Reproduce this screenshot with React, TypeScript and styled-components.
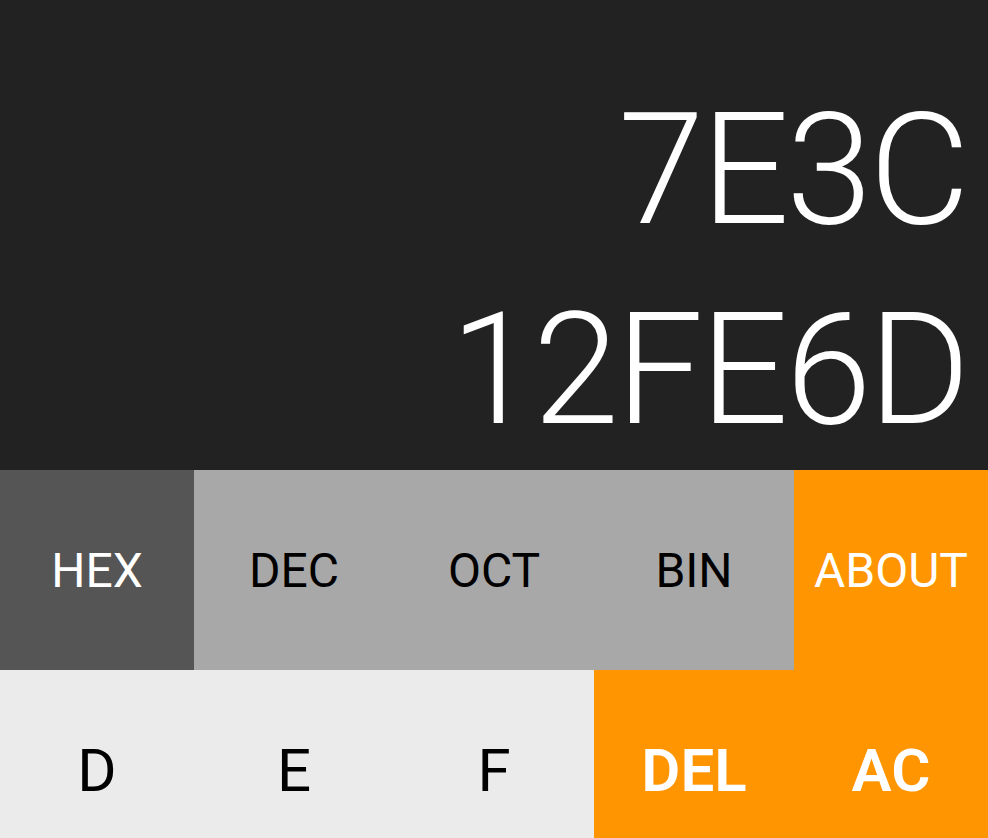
import * as React from 'react';
import styled, { createGlobalStyle } from 'styled-components';

const Color = {
  screen: '#222222',
  active: '#555555',
  base: '#a8a8a8',
  digit: '#ebebeb',
  accent: '#ff9500',
  light: '#ffffff',
  dark: '#000000',
};

type Tone = 'active' | 'base' | 'digit' | 'accent';

const GlobalStyle = createGlobalStyle`
  html, body {
    margin: 0;
    padding: 0;
    overflow: hidden;
    background: ${Color.screen};
  }
  * {
    box-sizing: border-box;
  }
`;

const S = {
  Container: styled.div`
    width: 988px;
    height: 838px;
    overflow: hidden;
    display: flex;
    flex-direction: column;
    font-family: Roboto, 'Liberation Sans', sans-serif;
  `,
  Display: styled.div`
    flex: 0 0 470px;
    background: ${Color.screen};
    display: flex;
    flex-direction: column;
    justify-content: flex-end;
    align-items: flex-end;
    padding: 0 21px 0 0;
  `,
  Value: styled.div`
    color: ${Color.light};
    font-size: 155px;
    font-weight: 300;
    line-height: 200px;
    letter-spacing: -3px;
    white-space: nowrap;
  `,
  Keypad: styled.div`
    display: grid;
    grid-template-columns: 194px repeat(3, 200px) 194px;
    grid-auto-rows: 200px;
  `,
  Key: styled.button<{ tone: Tone; big?: boolean; bold?: boolean }>`
    border: none;
    margin: 0;
    padding: 0;
    display: flex;
    align-items: center;
    justify-content: center;
    font-family: inherit;
    background: ${({ tone }) => Color[tone]};
    color: ${({ tone }) =>
      tone === 'active' || tone === 'accent' ? Color.light : Color.dark};
    font-size: ${({ big }) => (big ? '60px' : '48px')};
    font-weight: ${({ bold }) => (bold ? 600 : 400)};
    cursor: pointer;
  `,
};

const bases = ['HEX', 'DEC', 'OCT', 'BIN'];

const App = () => {
  const [base, setBase] = React.useState('HEX');

  return (
    <S.Container>
      <GlobalStyle />
      <S.Display>
        <S.Value>7E3C</S.Value>
        <S.Value>12FE6D</S.Value>
      </S.Display>
      <S.Keypad>
        {bases.map((b) => (
          <S.Key
            key={b}
            tone={b === base ? 'active' : 'base'}
            onClick={() => setBase(b)}
          >
            {b}
          </S.Key>
        ))}
        <S.Key tone="accent">ABOUT</S.Key>
        {['D', 'E', 'F'].map((d) => (
          <S.Key key={d} tone="digit" big>
            {d}
          </S.Key>
        ))}
        <S.Key tone="accent" big bold>
          DEL
        </S.Key>
        <S.Key tone="accent" big bold>
          AC
        </S.Key>
      </S.Keypad>
    </S.Container>
  );
};

export default App;
